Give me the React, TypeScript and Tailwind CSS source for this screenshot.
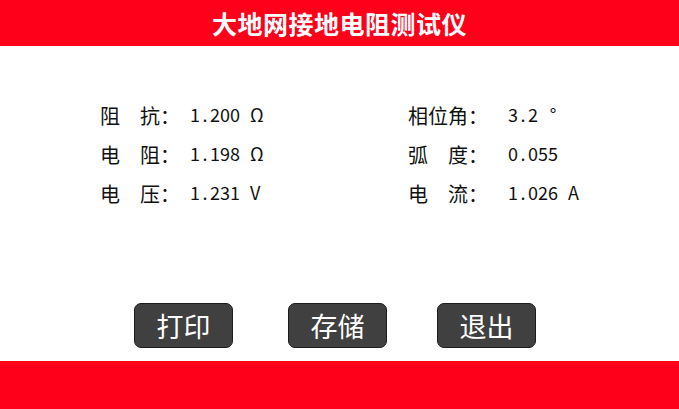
import React from 'react';

const FONT = '"Noto Sans CJK SC", "Noto Sans", sans-serif';

const rows: [string, string][] = [
  ['阻　抗： 1.200 Ω', '相位角：  3.2 °'],
  ['电　阻： 1.198 Ω', '弧　度：  0.055'],
  ['电　压： 1.231 V', '电　流：  1.026 A'],
];

// display font is a fixed grid: full-width 20px, half-width 10px
function GridText({ text }: { text: string }) {
  return (
    <span className="inline-flex">
      {Array.from(text).map((ch, i) => {
        const wide = ch.charCodeAt(0) > 0x2e80;
        return (
          <span
            key={i}
            className={wide
              ? 'inline-block w-[20px] text-center text-[20px]'
              : 'inline-block w-[10px] text-center text-[18px]'}
          >
            {ch === ' ' ? '\u00a0' : ch}
          </span>
        );
      })}
    </span>
  );
}

function PanelButton({ label, className = '' }: { label: string; className?: string }) {
  return (
    <button
      className={`w-[99px] h-[45px] rounded-[7px] bg-[#404040] border-[1.5px] border-[#1c1c1c] text-white text-[27px] leading-none flex items-center justify-center ${className}`}
    >
      {label}
    </button>
  );
}

export default function App() {
  return (
    <div className="w-[679px] h-[409px] flex flex-col bg-white overflow-hidden" style={{ fontFamily: FONT }}>
      {/* HEADER */}
      <header className="h-[46px] bg-[#ff001b] flex items-center justify-center">
        <h1 className="text-white font-bold text-[25px] leading-none tracking-[0.5px]">大地网接地电阻测试仪</h1>
      </header>

      {/* READINGS */}
      <main className="flex-1 flex flex-col">
        <div className="pt-[50px] flex flex-col text-[#111]">
          {rows.map(([l, r], i) => (
            <div key={i} className="h-[39px] flex items-center">
              <div className="w-[408px] pl-[100px]"><GridText text={l} /></div>
              <div><GridText text={r} /></div>
            </div>
          ))}
        </div>

        <div className="mt-auto mb-[13px] flex pl-[134px]">
          <PanelButton label="打印" />
          <PanelButton label="存储" className="ml-[55px]" />
          <PanelButton label="退出" className="ml-[50px]" />
        </div>
      </main>

      {/* FOOTER */}
      <footer className="h-[48px] bg-[#ff001b]" />
    </div>
  );
}
